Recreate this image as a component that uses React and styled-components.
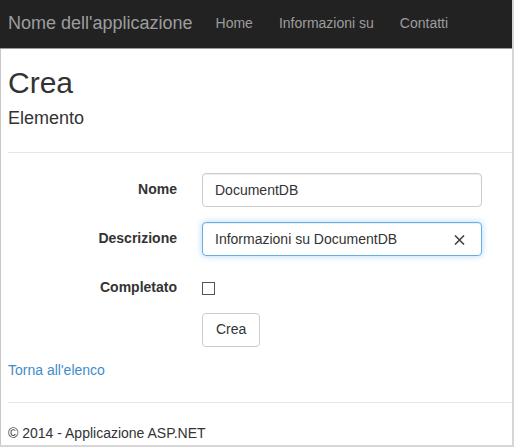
import React from "react";
import styled, { createGlobalStyle } from "styled-components";

const GlobalStyle = createGlobalStyle`
  * { box-sizing: border-box; }
  body {
    margin: 0;
    font-family: "Liberation Sans", Arial, sans-serif;
    font-size: 14px;
    line-height: 1.42857;
    color: #333;
    background: #fff;
  }
`;

const Frame = styled.div`
  width: 514px;
  height: 447px;
  border-right: 2px solid #d6d6d6;
  border-bottom: 2px solid #d6d6d6;
  display: flex;
  flex-direction: column;
  overflow: hidden;
`;

const Navbar = styled.nav`
  height: 49px;
  flex: none;
  background: #222;
  border-bottom: 1px solid #9a9a9a;
  display: flex;
  align-items: center;
  padding-left: 8px;
`;

const Brand = styled.a`
  font-size: 18px;
  color: #9d9d9d;
  padding-right: 10px;
  text-decoration: none;
`;

const NavLink = styled.a`
  font-size: 14px;
  color: #9d9d9d;
  padding: 0 13px;
  text-decoration: none;
`;

const Body = styled.main`
  flex: 1;
  border-left: 1px solid #c8c8c8;
  padding-left: 7px;
`;

const Title = styled.h2`
  font-size: 30px;
  font-weight: 500;
  line-height: 1.1;
  margin: 17px 0 0;
`;

const Subtitle = styled.h4`
  font-size: 18px;
  font-weight: 500;
  line-height: 1.1;
  margin: 10px 0 0;
`;

const Rule = styled.hr`
  border: 0;
  border-top: 1px solid #e6e6e6;
  margin: ${(p) => p.$top}px 0 ${(p) => p.$bottom}px;
`;

const Form = styled.form`
  display: grid;
  grid-template-columns: 169px 280px;
  column-gap: 25px;
  row-gap: 15px;
`;

const Label = styled.label`
  font-weight: bold;
  text-align: right;
  padding-top: ${(p) => p.$pad || 7}px;
`;

const Field = styled.div`
  position: relative;
`;

const Input = styled.input`
  display: block;
  width: 100%;
  height: 34px;
  padding: 6px 12px;
  font: inherit;
  color: #333;
  border: 1px solid ${(p) => (p.$focus ? "#66afe9" : "#ccc")};
  border-radius: 4px;
  outline: none;
  box-shadow: ${(p) =>
    p.$focus
      ? "inset 0 1px 1px rgba(0,0,0,.075), 0 0 6px rgba(102,175,233,.5)"
      : "inset 0 1px 1px rgba(0,0,0,.075)"};
`;

const ClearIcon = styled.svg`
  position: absolute;
  right: 17px;
  top: 13px;
`;

const CheckRow = styled.div`
  height: 27px;
  padding-top: 11px;
`;

const Box = styled.span`
  display: block;
  width: 13px;
  height: 13px;
  border: 1px solid #555;
  background: #fff;
`;

const Button = styled.button`
  font: inherit;
  color: #333;
  background: #fff;
  border: 1px solid #ccc;
  border-radius: 4px;
  height: 34px;
  padding: 0 13px;
`;

const BackLink = styled.a`
  display: block;
  color: #428bca;
  text-decoration: none;
  margin-top: 14px;
`;

const Footer = styled.footer`
  line-height: 20px;
`;

export default function App() {
  return (
    <>
      <GlobalStyle />
      <Frame>
        <Navbar>
          <Brand>Nome dell'applicazione</Brand>
          <NavLink>Home</NavLink>
          <NavLink>Informazioni su</NavLink>
          <NavLink>Contatti</NavLink>
        </Navbar>
        <Body>
          <Title>Crea</Title>
          <Subtitle>Elemento</Subtitle>
          <Rule $top={23} $bottom={20} />
          <Form>
            <Label>Nome</Label>
            <Field>
              <Input defaultValue="DocumentDB" />
            </Field>
            <Label>Descrizione</Label>
            <Field>
              <Input $focus defaultValue="Informazioni su DocumentDB" />
              <ClearIcon width="11" height="10" viewBox="0 0 11 10">
                <path d="M1 0.5L10 9.5M10 0.5L1 9.5" stroke="#444" strokeWidth="1.6" fill="none" />
              </ClearIcon>
            </Field>
            <Label $pad={7}>Completato</Label>
            <CheckRow>
              <Box />
            </CheckRow>
            <span />
            <div>
              <Button type="button">Crea</Button>
            </div>
          </Form>
          <BackLink>Torna all'elenco</BackLink>
          <Rule $top={21} $bottom={20} />
          <Footer>© 2014 - Applicazione ASP.NET</Footer>
        </Body>
      </Frame>
    </>
  );
}
